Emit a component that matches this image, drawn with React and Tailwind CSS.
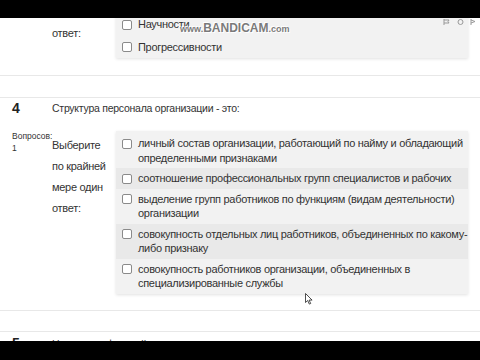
// Moodle quiz page captured in a screen recording

const q4Answers = [
  ["личный состав организации, работающий по найму и обладающий", "определенными признаками"],
  ["соотношение профессиональных групп специалистов и рабочих"],
  ["выделение групп работников по функциям (видам деятельности)", "организации"],
  ["совокупность отдельных лиц работников, объединенных по какому-", "либо признаку"],
  ["совокупность работников организации, объединенных в", "специализированные службы"],
];

function Box() {
  return <span className="mt-[2.5px] h-[10px] w-[10px] shrink-0 rounded-[2px] border border-[#8a8a8a] bg-white" />;
}

function Answer({ lines, shaded, tall }) {
  return (
    <div className={`flex gap-[6px] px-[6px] ${tall ? "py-[4px]" : "py-[3px]"} ${shaded ? "bg-[#e9e9e9]" : ""}`}>
      <Box />
      <div className="whitespace-nowrap text-[11px] leading-[14.5px] tracking-[-0.3px]">
        {lines.map((l) => (
          <div key={l}>{l}</div>
        ))}
      </div>
    </div>
  );
}

function Watermark() {
  return (
    <div className="absolute left-[180px] top-[19px] flex items-baseline font-bold text-[#7a7a7a] [text-shadow:0_0_1px_#fff,0_0_1px_#fff,1px_1px_0_#fff,-1px_-1px_0_#fff]">
      <span className="text-[9px]">www.</span>
      <span className="text-[12px]">BANDICAM</span>
      <span className="text-[9px]">.com</span>
    </div>
  );
}

export default function App() {
  return (
    <div className="relative h-[360px] w-[480px] overflow-hidden bg-white font-['Liberation_Sans',Arial,sans-serif] text-[#333]">
      <div className="relative z-10 h-[18px] bg-black" />

      <div className="relative h-[58px] border-b border-[#e8e8e8]">
        <div className="flex">
          <div className="w-[116px] pl-[52px] pt-[8px] text-[11px] leading-[15px] tracking-[-0.3px]">ответ:</div>
          <div className="mt-[-7px] w-[352px] bg-[#f2f2f2] pt-[2px] shadow-[0_1px_3px_rgba(0,0,0,0.12)]">
            <Answer lines={["Научности"]} tall />
            <Answer lines={["Прогрессивности"]} tall />
          </div>
        </div>
        <div className="absolute right-[4px] top-[1px] flex gap-[6px] text-[#999]">
          <svg width="8" height="6" viewBox="0 0 8 6"><path d="M1 0v6M1 1h5l-1 1.5 1 1.5H1" fill="none" stroke="currentColor" /></svg>
          <svg width="7" height="6" viewBox="0 0 7 6"><circle cx="3.5" cy="3" r="2.5" fill="none" stroke="currentColor" /></svg>
          <svg width="6" height="6" viewBox="0 0 6 6"><path d="M1 0v6M1 1l4 1.5L1 4" fill="none" stroke="currentColor" /></svg>
        </div>
      </div>

      <div className="mt-[21px] flex border-y border-[#e8e8e8] pb-[16px]">
        <div className="w-[52px] pl-[12px]">
          <div className="pt-[3px] text-[14px] font-bold leading-[15px] text-[#222]">4</div>
          <div className="mt-[14px] text-[8.5px] leading-[12px]">Вопросов:</div>
          <div className="text-[8.5px] leading-[12px]">1</div>
        </div>
        <div className="flex-1">
          <div className="pt-[3px] text-[10.5px] leading-[15px] tracking-[-0.25px]">Структура персонала организации - это:</div>
          <div className="mt-[15px] flex">
            <div className="w-[64px] pr-[10px] pt-[3.5px] text-[11px] leading-[21px] tracking-[-0.3px]">Выберите по крайней мере один ответ:</div>
            <div className="w-[352px] bg-[#f2f2f2] pt-[2px] shadow-[0_1px_3px_rgba(0,0,0,0.12)]">
              {q4Answers.map((lines, i) => (
                <Answer key={i} lines={lines} shaded={i % 2 === 1} />
              ))}
            </div>
          </div>
        </div>
      </div>

      <div className="mt-[20px] flex border-t border-[#e8e8e8]">
        <div className="w-[52px] pl-[12px] pt-[4px] text-[14px] font-bold leading-[15px] text-[#222]">5</div>
        <div className="pt-[5px] text-[10.5px] leading-[15px] tracking-[-0.25px]">Носителем функций по управлению персоналом выступает:</div>
      </div>

      <svg className="absolute left-[305px] top-[293px]" width="8" height="12" viewBox="0 0 8 12">
        <path d="M0.5 0.5v9l2.2-2 1.6 3.6 1.4-0.6-1.6-3.4h3z" fill="#fff" stroke="#222" strokeWidth="0.8" />
      </svg>

      <Watermark />
      <div className="absolute bottom-0 left-0 h-[19px] w-full bg-black" />
    </div>
  );
}
